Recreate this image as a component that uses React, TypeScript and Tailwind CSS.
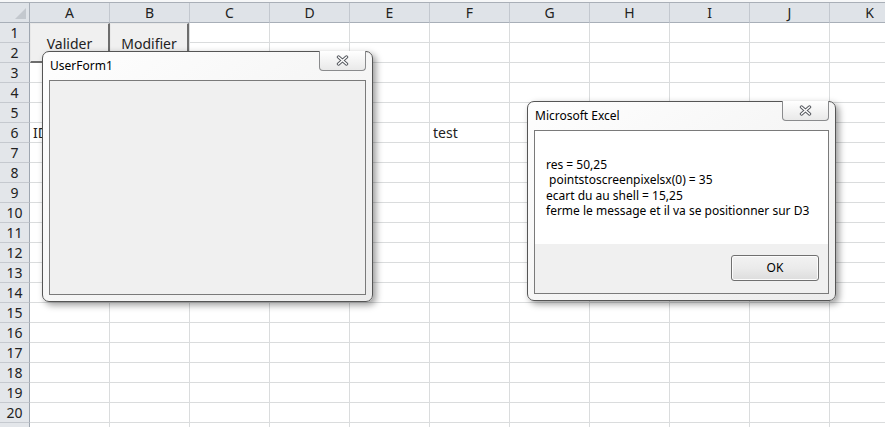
import React from 'react';

const COLS = ['A', 'B', 'C', 'D', 'E', 'F', 'G', 'H', 'I', 'J', 'K'];
const ROWS = Array.from({ length: 21 }, (_, i) => i + 1);

const CloseX: React.FC = () => (
    <svg width="13" height="11" viewBox="0 0 13 11">
        <path d="M2.5 2 L10.5 9 M10.5 2 L2.5 9" stroke="#55585e" strokeWidth="3.4" strokeLinecap="round" fill="none" />
        <path d="M2.5 2 L10.5 9 M10.5 2 L2.5 9" stroke="#ffffff" strokeWidth="1.5" strokeLinecap="round" fill="none" />
    </svg>
);

const CloseButton: React.FC = () => (
    <div className="absolute top-[-1px] right-[6px] w-[47px] h-[20px] border border-t-0 border-[#8a8b8d] rounded-b-[4px] bg-gradient-to-b from-[#ffffff] to-[#e9e9e9] flex items-center justify-center">
        <CloseX />
    </div>
);

const Window: React.FC<{ title: string; className: string; children: React.ReactNode }> = ({ title, className, children }) => (
    <div className={`absolute rounded-[7px] border border-[#555] bg-gradient-to-br from-[#fefefe] via-[#f6f6f6] to-[#ececec] shadow-[3px_3px_7px_rgba(0,0,0,0.4)] flex flex-col px-[6px] pb-[6px] ${className}`}>
        <CloseButton />
        <div className="h-[28px] flex items-center pl-[1px] text-[12px] text-black">{title}</div>
        {children}
    </div>
);

export default function App() {
    return (
        <div className="relative w-[885px] h-[427px] overflow-hidden bg-white font-['Noto_Sans',sans-serif]">
            <div className="h-[3px] bg-[#f6f7f8] border-b border-[#a9afb7]" />
            <div className="grid grid-cols-[30px_repeat(11,80px)] w-[910px] text-[14px] text-[#222]">
                <div className="h-[20px] bg-[#dfe3e8] border-r border-b border-[#a8afb8] relative">
                    <div className="absolute right-[3px] bottom-[3px] w-0 h-0 border-l-[11px] border-l-transparent border-b-[11px] border-b-[#c3c8ce]" />
                </div>
                {COLS.map(c => (
                    <div key={c} className="h-[20px] bg-[#dfe3e8] border-r border-[#c3c8cf] border-b border-b-[#a8afb8] flex items-center justify-center leading-none">{c}</div>
                ))}
                {ROWS.map(r => (
                    <React.Fragment key={r}>
                        <div className="h-[20px] bg-[#e3e6ea] border-r border-r-[#9ea6b0] border-b border-b-[#c5c9cf] flex items-center justify-center leading-none">{r < 21 ? r : ''}</div>
                        {COLS.map(c => (
                            <div key={c} className="h-[20px] border-r border-b border-[#dadcdd] flex items-center px-[3px] leading-none whitespace-nowrap">
                                {r === 6 && c === 'A' ? 'ID' : r === 6 && c === 'F' ? 'test' : ''}
                            </div>
                        ))}
                    </React.Fragment>
                ))}
            </div>

            <div className="absolute left-[30px] top-[23px] w-[80px] h-[40px] bg-[#f0f0f0] border-r-2 border-b-2 border-[#6d6d6d] border-l border-t border-l-[#e8e8e8] border-t-[#e8e8e8] flex items-center justify-center pt-[2px] text-[14px] text-[#222]">Valider</div>
            <div className="absolute left-[110px] top-[23px] w-[79px] h-[40px] bg-[#f0f0f0] border-r-2 border-b-2 border-[#6d6d6d] border-l border-t border-l-[#e8e8e8] border-t-[#e8e8e8] flex items-center justify-center pt-[2px] text-[14px] text-[#222]">Modifier</div>

            <Window title="UserForm1" className="left-[42px] top-[51px] w-[331px] h-[251px]">
                <div className="flex-1 border border-[#7a7a7a] bg-[#f0f0f0]" />
            </Window>

            <Window title="Microsoft Excel" className="left-[527px] top-[101px] w-[309px] h-[200px]">
                <div className="flex-1 border border-[#7a7a7a] flex flex-col">
                    <div className="bg-white h-[113px] pl-[11px] pt-[26px] text-[12px] leading-[15.3px] text-black whitespace-pre">
                        <div>res = 50,25</div>
                        <div> pointstoscreenpixelsx(0) = 35</div>
                        <div>ecart du au shell = 15,25</div>
                        <div>ferme le message et il va se positionner sur D3</div>
                    </div>
                    <div className="flex-1 bg-[#f0f0f0] flex justify-end items-start pt-[11px] pr-[9px]">
                        <div className="w-[88px] h-[26px] border border-[#707070] rounded-[3px] bg-gradient-to-b from-[#f2f2f2] via-[#ebebeb] to-[#dddddd] shadow-[inset_0_0_0_1px_#fcfcfc] flex items-center justify-center text-[12px] text-black">OK</div>
                    </div>
                </div>
            </Window>
        </div>
    );
}
